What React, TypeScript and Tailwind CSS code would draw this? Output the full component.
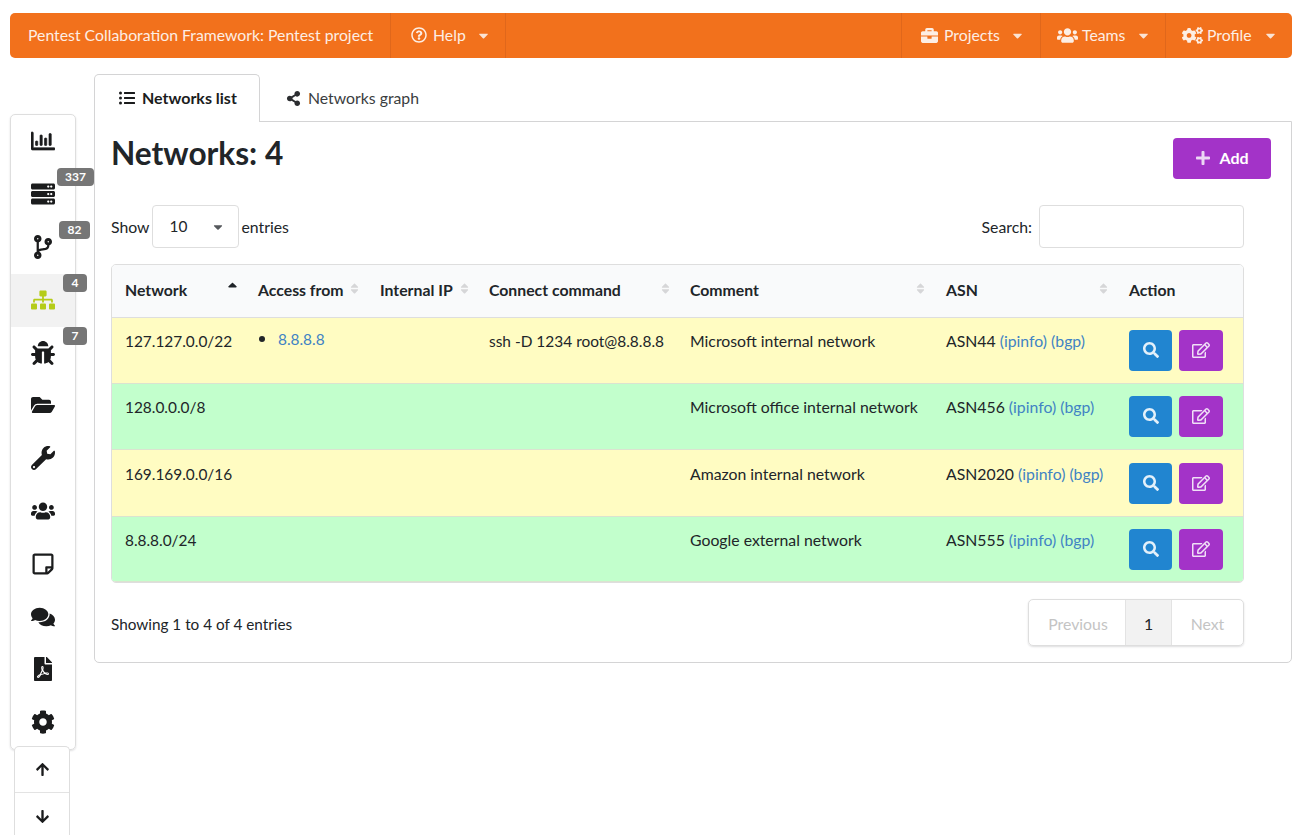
import React from "react";
import {
  FaRegChartBar, FaServer, FaCodeBranch, FaSitemap, FaBug, FaFolderOpen, FaWrench, FaUsers,
  FaRegStickyNote, FaComments, FaFilePdf, FaCog, FaArrowUp, FaArrowDown, FaRegQuestionCircle,
  FaBriefcase, FaCogs, FaListUl, FaShareAlt, FaPlus, FaSearch, FaRegEdit, FaCaretDown,
  FaSortUp, FaSort,
} from "react-icons/fa";

const side = [
  { I: FaRegChartBar },
  { I: FaServer, b: "337", cls: "left-[46px] w-[37px]" },
  { I: FaCodeBranch, b: "82", cls: "left-[48px] w-[31px]" },
  { I: FaSitemap, b: "4", cls: "left-[52px] w-[24px]", active: true },
  { I: FaBug, b: "7", cls: "left-[52px] w-[24px]" },
  { I: FaFolderOpen },
  { I: FaWrench },
  { I: FaUsers },
  { I: FaRegStickyNote },
  { I: FaComments },
  { I: FaFilePdf },
  { I: FaCog },
];

const cols = [
  { t: "Network", w: "w-[133px] pl-[13px]", sort: "up" },
  { t: "Access from", w: "w-[122px] pl-[13px]" },
  { t: "Internal IP", w: "w-[110px] pl-[13px]" },
  { t: "Connect command", w: "w-[201px] pl-[12px]" },
  { t: "Comment", w: "w-[255px] pl-[12px]" },
  { t: "ASN", w: "w-[183px] pl-[13px]" },
  { t: "Action", w: "w-[128px] pl-[13px]", none: true },
];

const rows = [
  { n: "127.127.0.0/22", a: "8.8.8.8", c: "ssh -D 1234 root@8.8.8.8", m: "Microsoft internal network", s: "ASN44", y: true, h: "h-[66px]", pt: "pt-[11px]", bt: "pt-[12px]" },
  { n: "128.0.0.0/8", m: "Microsoft office internal network", s: "ASN456", h: "h-[66px]", pt: "pt-[11px]", bt: "pt-[12px]" },
  { n: "169.169.0.0/16", m: "Amazon internal network", s: "ASN2020", y: true, h: "h-[67px]", pt: "pt-[12px]", bt: "pt-[13px]" },
  { n: "8.8.8.0/24", m: "Google external network", s: "ASN555", h: "h-[65px]", pt: "pt-[11px]", bt: "pt-[12px]" },
];

function NavItem({ icon, label, className }: { icon: React.ReactNode; label: string; className: string }) {
  return (
    <div className={`flex items-center h-full pb-[1px] border-l border-[#e0671b] ${className}`}>
      {icon}
      <span>{label}</span>
      <FaCaretDown className="ml-auto text-[15px] text-[#fbe3d3]" />
    </div>
  );
}

function SortIcon({ up }: { up?: boolean }) {
  return up ? (
    <FaSortUp className="absolute right-[5px] top-[16px] text-[15px] text-[#1f2328]" />
  ) : (
    <FaSort className="absolute right-[6px] top-[17px] text-[13px] text-[#d6d6d8]" />
  );
}

export default function App() {
  return (
    <div className="h-[835px] w-[1297px] overflow-hidden bg-white pt-[13px] pl-[10px] pr-[5px] text-[15.8px] text-[#212529]" style={{ fontFamily: "Lato, 'Open Sans', sans-serif" }}>
      <nav className="flex h-[45px] items-center rounded-[5px] bg-[#f2711c] text-[15.8px] text-[#fdeee4]">
        <div className="w-[380px] pb-[1px] pl-[18px]">Pentest Collaboration Framework: Pentest project</div>
        <NavItem className="w-[116px] pl-[20px] pr-[14px] border-r" icon={<FaRegQuestionCircle className="mr-[6px] text-[16px]" />} label="Help" />
        <div className="flex-1" />
        <NavItem className="w-[139px] pl-[19px] pr-[15px]" icon={<FaBriefcase className="mr-[6px] text-[17px]" />} label="Projects" />
        <NavItem className="w-[125px] pl-[16px] pr-[14px]" icon={<FaUsers className="mr-[4px] text-[21px]" />} label="Teams" />
        <NavItem className="w-[127px] pl-[16px] pr-[14px]" icon={<FaCogs className="mr-[4px] text-[21px]" />} label="Profile" />
      </nav>

      <div className="flex items-start">
        <div className="mt-[56px] w-[66px] shrink-0">
          <aside className="rounded-[5px] border border-[#dedede] pt-[0.5px] shadow-[0_1px_2px_rgba(34,36,38,0.15)]">
            {side.map(({ I, b, cls, active }, i) => (
              <div key={i} className={`relative flex h-[52.8px] items-center justify-center pb-[1px] text-[24px] ${active ? "bg-[#f2f2f2] text-[#b5cc18]" : "text-[#1b1c1d]"}`}>
                <I stroke="currentColor" strokeWidth={i === 0 ? 14 : 0} />
                {b && (
                  <span className={`absolute top-0 flex h-[18px] items-center justify-center rounded-[4px] bg-[#767676] text-[12px] font-bold text-white ${cls}`}>
                    {b}
                  </span>
                )}
              </div>
            ))}
          </aside>
          <div className="relative ml-[4px] -mt-[4px] w-[56px] rounded-t-[5px] border border-b-0 border-[#dedede] bg-white">
            <div className="flex h-[46px] items-center justify-center border-b border-[#e3e3e3] text-[15px] text-[#1b1c1d]"><FaArrowUp /></div>
            <div className="flex h-[46px] items-center justify-center text-[15px] text-[#1b1c1d]"><FaArrowDown /></div>
          </div>
        </div>

        <main className="ml-[18px] mt-[16px] flex-1">
          <div className="relative z-10 flex h-[48px]">
            <div className="flex w-[166px] items-center gap-[7px] rounded-t-[5px] border border-b-0 border-[#d4d4d5] bg-white pb-[1px] pl-[24px] text-[16px] font-bold text-[#1b1c1d]">
              <FaListUl className="text-[16px]" /><span>Networks list</span>
            </div>
            <div className="flex items-center gap-[7px] pl-[26px] text-[#3a3d40]">
              <FaShareAlt className="text-[15px] text-[#2b2d30]" /><span>Networks graph</span>
            </div>
          </div>
          <section className="-mt-px h-[542px] rounded-b-[5px] border border-[#d4d4d5] px-[16px]">
            <div className="flex items-start justify-between pr-[4px] pt-[16px]">
              <h1 className="-mt-[1px] text-[31.6px] leading-[32px] font-bold text-[#212529]">Networks: 4</h1>
              <button className="flex h-[41px] w-[98px] items-center justify-center gap-[8px] rounded-[4px] bg-[#a333c8] pb-[1px] text-[16px] font-bold text-white">
                <FaPlus className="text-[16px] text-[#ecd6f4]" />Add
              </button>
            </div>

            <div className="mt-[26px] flex w-[1133px] items-center justify-between">
              <div className="flex items-center gap-[2px]">
                <span>Show</span>
                <div className="relative flex h-[43px] w-[87px] items-center rounded-[4px] border border-[#dedede] pl-[17px]">
                  <span className="pt-[1px] text-[15.4px]">10</span>
                  <FaCaretDown className="absolute right-[13px] text-[14px] text-[#55585c]" />
                </div>
                <span className="ml-[1px]">entries</span>
              </div>
              <div className="flex items-center gap-[7px]">
                <span>Search:</span>
                <div className="h-[43px] w-[205px] rounded-[4px] border border-[#dedede]" />
              </div>
            </div>

            <div className="mt-[16px] w-[1133px] overflow-hidden rounded-[5px] border border-[#dedede]">
              <table className="w-[1131px] table-fixed border-collapse">
                <thead>
                  <tr className="h-[52px] bg-[#f9fafb] text-left">
                    {cols.map((c) => (
                      <th key={c.t} className={`relative border-b border-[#dedede] pb-[2px] text-[15.8px] font-bold ${c.w}`}>
                        {c.t}
                        {!c.none && <SortIcon up={c.sort === "up"} />}
                      </th>
                    ))}
                  </tr>
                </thead>
                <tbody>
                  {rows.map((r) => (
                    <tr key={r.n} className={`${r.h} ${r.y ? "bg-[#fffcc2]" : "bg-[#c2ffcc]"} align-top`}>
                      <td className={`border-b border-[#dbe3d0] pl-[13px] text-[15.4px] leading-[25px] ${r.pt}`}>{r.n}</td>
                      <td className="border-b border-[#dbe3d0] pl-[13px] pt-[10px]">
                        {r.a && (
                          <div className="flex items-center">
                            <span className="ml-[1px] mr-[13px] h-[6px] w-[6px] rounded-full bg-[#212529]" />
                            <span className="text-[15.4px] text-[#4183c4]">{r.a}</span>
                          </div>
                        )}
                      </td>
                      <td className="border-b border-[#dbe3d0]" />
                      <td className={`border-b border-[#dbe3d0] pl-[12px] text-[15.45px] leading-[25px] whitespace-nowrap ${r.pt}`}>{r.c}</td>
                      <td className={`border-b border-[#dbe3d0] pl-[12px] whitespace-nowrap ${r.pt}`}>{r.m}</td>
                      <td className={`border-b border-[#dbe3d0] pl-[13px] whitespace-nowrap ${r.pt}`}>
                        {r.s} <span className="text-[#4183c4]">(ipinfo) (bgp)</span>
                      </td>
                      <td className={`border-b border-[#dbe3d0] pl-[13px] ${r.bt}`}>
                        <div className="flex gap-[7px]">
                          <button className="flex h-[41px] w-[43px] items-center justify-center rounded-[4px] bg-[#2185d0] text-[16px] text-[#e3f0fa]"><FaSearch /></button>
                          <button className="flex h-[41px] w-[44px] items-center justify-center rounded-[4px] bg-[#a333c8] text-[18px] text-[#f0e0f6]"><FaRegEdit /></button>
                        </div>
                      </td>
                    </tr>
                  ))}
                </tbody>
              </table>
            </div>

            <div className="mt-[16px] flex w-[1133px] items-center justify-between">
              <span className="mt-[5px] text-[15.3px]">Showing 1 to 4 of 4 entries</span>
              <div className="flex h-[47px] overflow-hidden rounded-[5px] border border-[#dedede] shadow-[0_1px_2px_rgba(34,36,38,0.15)]">
                <div className="flex w-[96px] items-center justify-center pl-[2px] pt-[3px] text-[#c4c4c4]">Previous</div>
                <div className="flex w-[47px] items-center justify-center border-x border-[#e3e3e3] bg-[#f2f2f2] pt-[3px] text-[#212529]">1</div>
                <div className="flex w-[71px] items-center justify-center pt-[3px] text-[#c4c4c4]">Next</div>
              </div>
            </div>
          </section>
        </main>
      </div>
    </div>
  );
}
